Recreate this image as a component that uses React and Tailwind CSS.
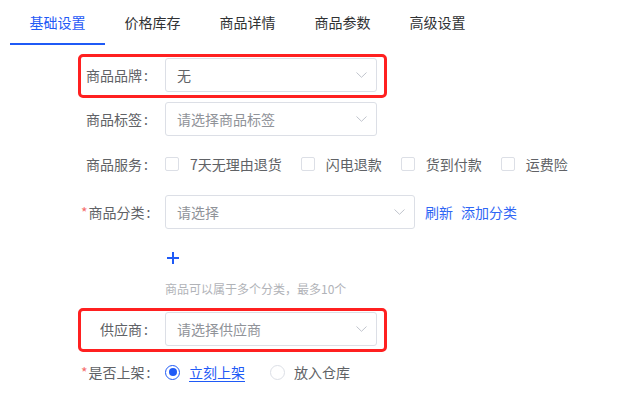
import { useState } from 'react';

const tabs = ['基础设置', '价格库存', '商品详情', '商品参数', '高级设置'];
const services = ['7天无理由退货', '闪电退款', '货到付款', '运费险'];

const Chevron = () => (
    <svg width="11" height="6" viewBox="0 0 11 6" fill="none">
        <path d="M0.5 0.5 L5.5 5.3 L10.5 0.5" stroke="#c0c4cc" strokeWidth="1" />
    </svg>
);

const Select = ({ value, placeholder, width }) => (
    <div
        className={`h-[34px] ${width} border border-[#dcdfe6] rounded-[3px] flex items-center justify-between pl-[11px] pr-[9px] bg-white`}
    >
        <span className={value ? 'text-[#606266]' : 'text-[#909399]'}>{value || placeholder}</span>
        <Chevron />
    </div>
);

const Row = ({ label, required, boxed, className = '', children }) => (
    <div
        className={
            boxed
                ? `ml-[78px] w-[309px] border-[3px] border-[#ff2020] rounded-[5px] pt-[1px] pb-[3px] flex items-center ${className}`
                : `ml-[81px] flex items-center ${className}`
        }
    >
        <div className="w-[67px] shrink-0 text-right text-[#606266] whitespace-nowrap">
            {required && <span className="text-[#f56c6c] mr-[1px]">*</span>}
            {label}<span className="ml-[2px]">:</span>
        </div>
        <div className="ml-[17px] flex items-center">{children}</div>
    </div>
);

const App = () => {
    const [active, setActive] = useState(0);
    const [checked, setChecked] = useState([]);
    const [shelf, setShelf] = useState('now');

    const toggle = (s) =>
        setChecked((c) => (c.includes(s) ? c.filter((x) => x !== s) : [...c, s]));

    return (
        <div
            className="w-[628px] h-[399px] bg-white text-[14px] leading-[20px] overflow-hidden"
            style={{ fontFamily: '"Noto Sans CJK SC", "Noto Sans", sans-serif' }}
        >
            {/* Tabs */}
            <div className="flex pl-[10px] h-[45px]">
                {tabs.map((t, i) => (
                    <button
                        key={t}
                        onClick={() => setActive(i)}
                        className={`w-[95px] h-[45px] flex items-center justify-center border-b-2 ${
                            active === i ? 'text-[#1f5af6] border-[#1f5af6]' : 'text-[#303133] border-transparent'
                        }`}
                    >
                        {t}
                    </button>
                ))}
            </div>

            {/* Form */}
            <Row label="商品品牌" boxed className="mt-[9px]">
                <Select value="无" width="w-[212px]" />
            </Row>

            <Row label="商品标签" className="mt-[4px] h-[34px]">
                <Select placeholder="请选择商品标签" width="w-[212px]" />
            </Row>

            <Row label="商品服务" className="mt-[11px] h-[34px]">
                <div className="flex items-center gap-[19px]">
                    {services.map((s) => (
                        <label key={s} className="flex items-center gap-[11px] cursor-pointer text-[#606266]" onClick={() => toggle(s)}>
                            <span
                                className={`w-[14px] h-[14px] border rounded-[2px] ${
                                    checked.includes(s) ? 'bg-[#1f5af6] border-[#1f5af6]' : 'border-[#dcdfe6] bg-white'
                                }`}
                            ></span>
                            {s}
                        </label>
                    ))}
                </div>
            </Row>

            <Row label="商品分类" required className="mt-[14px] h-[34px]">
                <Select placeholder="请选择" width="w-[250px]" />
                <span className="ml-[10px] text-[#2f66f5] cursor-pointer">刷新</span>
                <span className="ml-[8px] text-[#2f66f5] cursor-pointer">添加分类</span>
            </Row>

            <div className="ml-[167px] mt-[19px] h-[20px] flex items-center">
                <svg width="12" height="12" viewBox="0 0 12 12">
                    <path d="M6 0 V12 M0 6 H12" stroke="#1f5af6" strokeWidth="2" />
                </svg>
            </div>

            <div className="ml-[165px] mt-[13px] text-[12px] leading-[16px] text-[#b1b3b8]">
                商品可以属于多个分类，最多10个
            </div>

            <Row label="供应商" boxed className="mt-[11px]">
                <Select placeholder="请选择供应商" width="w-[212px]" />
            </Row>

            <Row label="是否上架" required className="mt-[3px] h-[34px]">
                <div className="flex items-center">
                    <label className="flex items-center cursor-pointer" onClick={() => setShelf('now')}>
                        <span
                            className={`w-[15px] h-[15px] rounded-full border flex items-center justify-center ${
                                shelf === 'now' ? 'border-[#1f5af6]' : 'border-[#dcdfe6]'
                            }`}
                        >
                            {shelf === 'now' && <span className="w-[8px] h-[8px] rounded-full bg-[#1f5af6]"></span>}
                        </span>
                        <span className={`ml-[9px] ${shelf === 'now' ? 'text-[#1f5af6] underline underline-offset-[3px]' : 'text-[#606266]'}`}>
                            立刻上架
                        </span>
                    </label>
                    <label className="flex items-center cursor-pointer ml-[25px]" onClick={() => setShelf('store')}>
                        <span
                            className={`w-[15px] h-[15px] rounded-full border flex items-center justify-center ${
                                shelf === 'store' ? 'border-[#1f5af6]' : 'border-[#dcdfe6]'
                            }`}
                        >
                            {shelf === 'store' && <span className="w-[8px] h-[8px] rounded-full bg-[#1f5af6]"></span>}
                        </span>
                        <span className={`ml-[9px] ${shelf === 'store' ? 'text-[#1f5af6] underline underline-offset-[3px]' : 'text-[#606266]'}`}>
                            放入仓库
                        </span>
                    </label>
                </div>
            </Row>
        </div>
    );
};

export default App;
